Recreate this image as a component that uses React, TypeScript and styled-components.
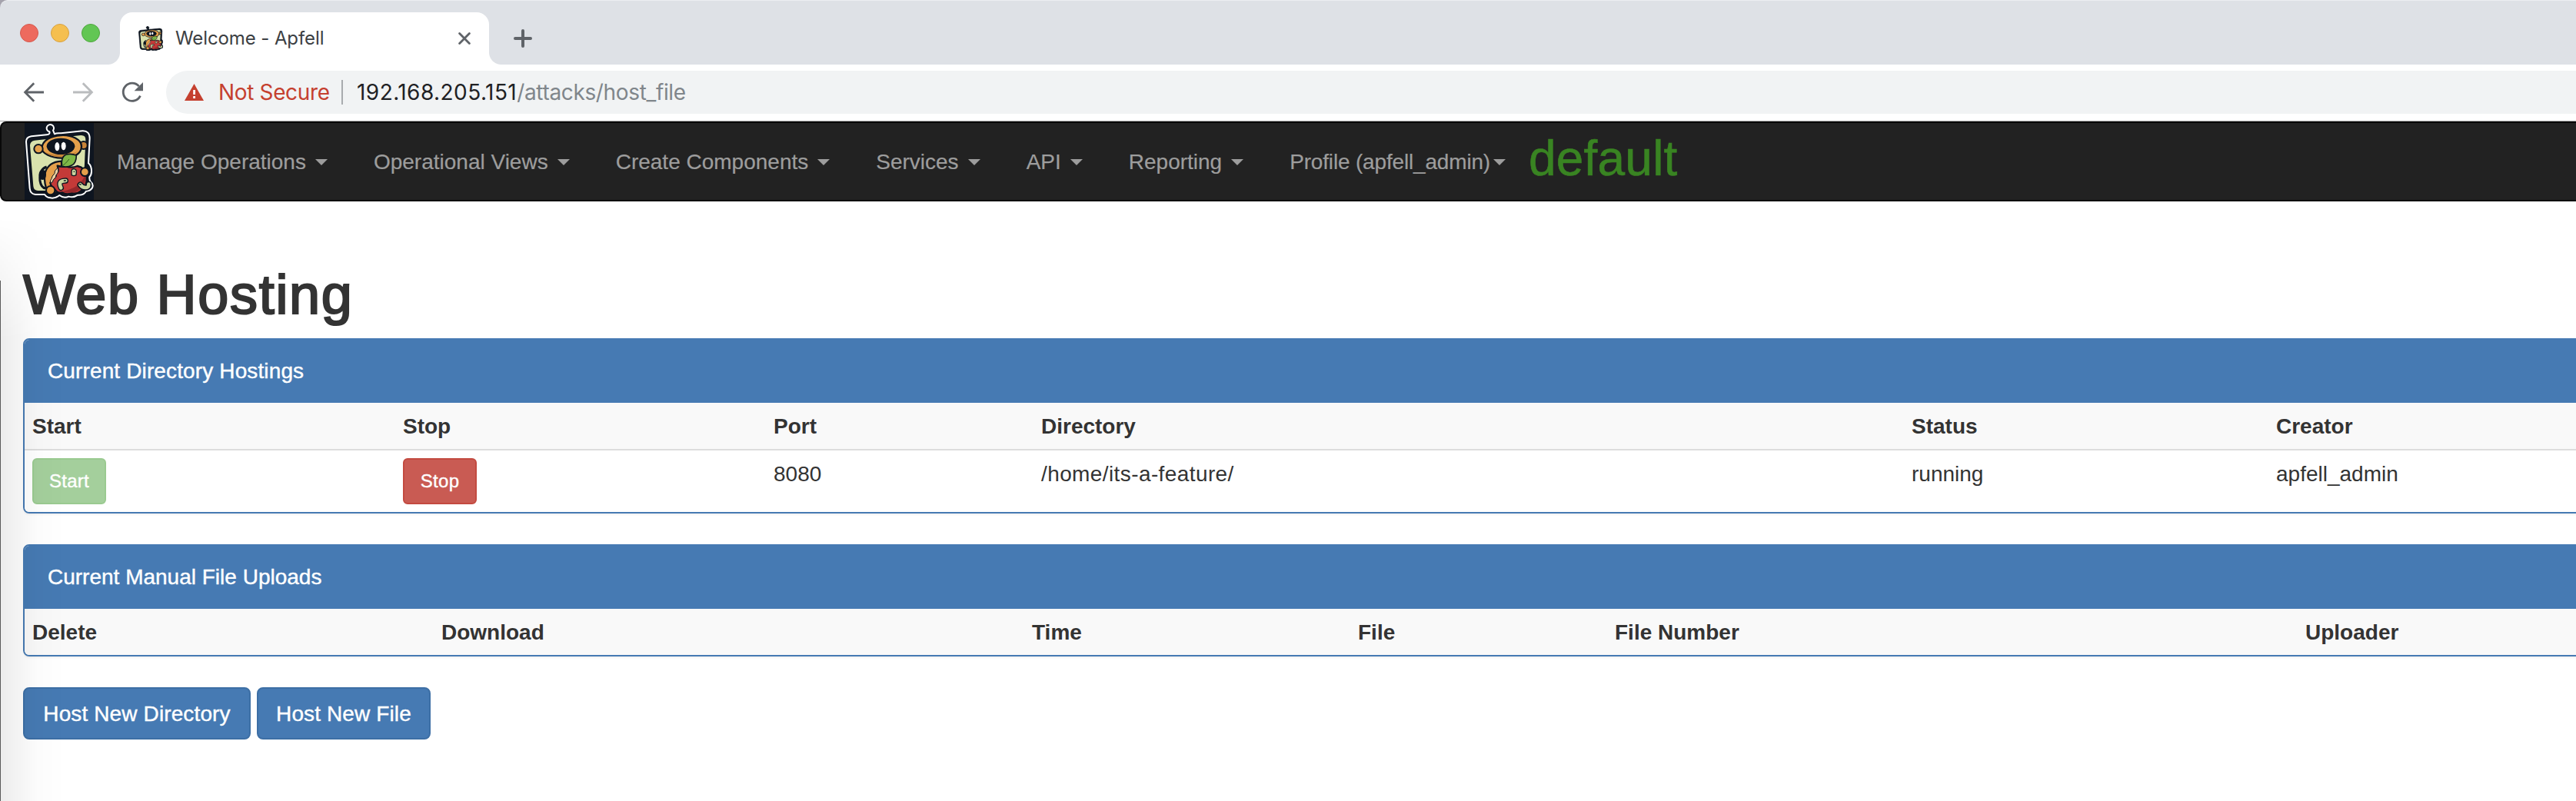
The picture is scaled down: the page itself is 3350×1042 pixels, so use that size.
import React from "react";
import styled, { createGlobalStyle } from "styled-components";

const sans = `"Liberation Sans", Arial, Helvetica, sans-serif`;
const chromeFont = `Inter, Roboto, "Liberation Sans", sans-serif`;

const GlobalStyle = createGlobalStyle`
  *, *::before, *::after { box-sizing: border-box; }
  html, body { margin: 0; background: #fff; }
  body { overflow: hidden; }
`;

const Window = styled.div`
  position: relative;
  width: 100vw;
  height: 100vh;
  overflow: hidden;
  background: #fff;
  color: #333;
  font: 28px/40px ${sans};
`;

/* ---------- Browser chrome ---------- */

const StripBackdrop = styled.div`
  background: #a5a3ad;
`;

const TabStrip = styled.div`
  display: flex;
  align-items: center;
  height: 84px;
  padding-left: 26px;
  border-top: 1px solid #eceef1;
  border-top-left-radius: 10px;
  background: #dee1e6;
`;

const Lights = styled.div`
  display: flex;
  gap: 16px;
  width: 130px;
  padding-top: 1px;
`;

const Light = styled.span<{ $fill: string; $edge: string }>`
  width: 24px;
  height: 24px;
  border: 1px solid ${(p) => p.$edge};
  border-radius: 50%;
  background: ${(p) => p.$fill};
`;

const Tab = styled.div`
  position: relative;
  align-self: flex-end;
  display: flex;
  align-items: center;
  width: 480px;
  height: 68px;
  padding: 0 24px;
  border-radius: 16px 16px 0 0;
  background: #fff;

  &::before,
  &::after {
    content: "";
    position: absolute;
    bottom: 0;
    width: 16px;
    height: 16px;
  }
  &::before {
    left: -16px;
    background: radial-gradient(circle at 0 0, transparent 15.5px, #fff 16.5px);
  }
  &::after {
    right: -16px;
    background: radial-gradient(circle at 100% 0, transparent 15.5px, #fff 16.5px);
  }
`;

const TabTitle = styled.span`
  flex: 1;
  padding-left: 16px;
  color: #3c4043;
  font: 24px/32px ${chromeFont};
  letter-spacing: -0.1px;
`;

const NewTab = styled.span`
  display: flex;
  margin: 15px 0 0 32px;
  align-self: flex-start;
  padding-top: 22px;
`;

const Toolbar = styled.div`
  display: flex;
  align-items: center;
  height: 74px;
  padding: 7px 0 9px 24px;
  border-bottom: 1px solid #a9a9a9;
`;

const NavIcons = styled.div`
  display: flex;
  gap: 24px;
  width: 192px;
`;

const AddressBar = styled.div`
  display: flex;
  align-items: center;
  flex: 1;
  height: 56px;
  padding-left: 24px;
  border-radius: 28px 0 0 28px;
  background: #f1f3f4;
  font: 28px/56px ${chromeFont};
  white-space: nowrap;
`;

const NotSecure = styled.span`
  width: 160px;
  margin-left: 19px;
  color: #c5402f;
  letter-spacing: -0.35px;
`;

const Divider = styled.span`
  width: 2px;
  height: 32px;
  margin-right: 18px;
  background: #a8abae;
`;

const Host = styled.span`
  color: #202124;
  letter-spacing: 0.45px;
`;

const Path = styled.span`
  color: #80868b;
  letter-spacing: -0.35px;
`;

/* ---------- Application navbar ---------- */

const Navbar = styled.nav`
  display: flex;
  align-items: center;
  width: calc(100% + 20px);
  height: 104px;
  padding-left: 30px;
  border: 2px solid #080808;
  border-radius: 8px;
  background: #222;
`;

const NavItem = styled.a<{ $tight?: boolean }>`
  display: flex;
  align-items: center;
  padding: 2px 30px 0;
  color: #9d9d9d;
  letter-spacing: ${(p) => (p.$tight ? "-0.17px" : "0")};
  white-space: nowrap;
  -webkit-text-stroke: 0.2px currentColor;

  &::after {
    content: "";
    margin-left: ${(p) => (p.$tight ? 4 : 12)}px;
    border: 8px solid transparent;
    border-top-color: currentColor;
    border-bottom: 0;
  }
`;

const OperationName = styled.span`
  padding-bottom: 8px;
  color: #398422;
  font-size: 64px;
  line-height: 80px;
  letter-spacing: 0.2px;
  -webkit-text-stroke: 0.6px currentColor;
`;

/* ---------- Page ---------- */

const Main = styled.main`
  width: calc(100% + 40px);
  padding: 82px 0 0 30px;
`;

const Title = styled.h1`
  margin: 0 0 17px;
  font-size: 72px;
  line-height: 79px;
  font-weight: 400;
  letter-spacing: 1.7px;
  -webkit-text-stroke: 2.2px currentColor;
`;

const Panel = styled.section`
  margin-bottom: 40px;
  border: 2px solid #467ab3;
  border-radius: 8px;
  box-shadow: 0 2px 2px rgba(0, 0, 0, 0.05);
  overflow: hidden;
`;

const PanelHeading = styled.header<{ $spacing?: number }>`
  height: 82px;
  padding: 21px 30px;
  background: #467ab3;
  color: #fff;
  letter-spacing: ${(p) => p.$spacing ?? 0}px;
  -webkit-text-stroke: 0.4px currentColor;
`;

const Row = styled.div<{ $cols: string; $head?: boolean }>`
  display: grid;
  grid-template-columns: ${(p) => p.$cols};
  height: ${(p) => (p.$head ? 60 : 82)}px;
  background: ${(p) => (p.$head ? "#f9f9f9" : "#fff")};
  font-weight: ${(p) => (p.$head ? 700 : 400)};
  border-top: ${(p) => (p.$head ? "0" : "2px solid #ddd")};
`;

const Cell = styled.div<{ $spacing?: number }>`
  padding: 11px 10px 9px;
  letter-spacing: ${(p) => p.$spacing ?? 0}px;
`;

const ActionCell = styled(Cell)`
  padding-top: 10px;
`;

const SmallButton = styled.button<{ $bg: string; $edge: string }>`
  display: block;
  width: 96px;
  height: 60px;
  padding: 0;
  border: 2px solid ${(p) => p.$edge};
  border-radius: 6px;
  background: ${(p) => p.$bg};
  color: #fff;
  font: 24px/36px ${sans};
  letter-spacing: 0.3px;
  -webkit-text-stroke: 0.4px currentColor;
`;

const Actions = styled.div`
  display: flex;
  gap: 8px;
`;

const PrimaryButton = styled.button<{ $width: number }>`
  width: ${(p) => p.$width}px;
  height: 68px;
  padding: 2px 0 0;
  border: 2px solid #3d6fa5;
  border-radius: 8px;
  background: #467ab3;
  color: #fff;
  font: 28px/40px ${sans};
  letter-spacing: 0.12px;
  white-space: nowrap;
  -webkit-text-stroke: 0.4px currentColor;
`;

/* Soft shadow cast over the page by the window edge on the left */
const EdgeShadow = styled.div`
  position: absolute;
  left: 0;
  top: 262px;
  bottom: 0;
  width: 90px;
  background: linear-gradient(
    to right,
    rgba(0, 0, 0, 0.075),
    rgba(0, 0, 0, 0.045) 25px,
    rgba(0, 0, 0, 0.012) 50px,
    transparent 85px
  );
  mask-image: linear-gradient(to bottom, transparent 20px, #000 180px);
  pointer-events: none;
`;

const EdgeLine = styled.div`
  position: absolute;
  left: 0;
  top: 365px;
  bottom: 0;
  width: 1px;
  background: #5a5a5a;
`;

/* ---------- Drawings ---------- */

const ink = "#0e1520";

const MascotSvg = styled.svg`
  flex: none;
`;

function Mascot({ width, height, badge }: { width: number; height: number; badge?: boolean }) {
  return (
    <MascotSvg
      width={width}
      height={height}
      viewBox={badge ? "6 15 270 300" : "8 18 262 290"}
      preserveAspectRatio="none"
    >
      {badge && <rect x="6" y="15" width="270" height="300" fill={ink} />}
      <path
        d="M12 88 Q12 70 32 67 L92 61 Q106 60 103 49 A14 14 0 1 1 117 44 L123 58 Q130 53 148 55 L232 46 Q260 45 260 75 L255 172 Q268 183 267 206 Q266 220 259 226 Q258 238 264 245 Q276 254 270 268 Q262 280 246 281 Q238 298 214 296 Q196 308 178 302 Q160 311 142 297 Q124 311 106 307 Q92 306 84 294 L48 294 Q28 292 26 270 Z"
        fill={ink}
        stroke={badge ? "#fff" : ink}
        strokeWidth="6"
        strokeLinejoin="round"
      />
      <path
        d="M27 103 Q27 86 45 83 L225 63 Q245 62 244 82 L236 262 Q235 279 216 279 L58 279 Q42 279 40 262 Z"
        fill="#d9e2ad"
      />
      <circle cx="236" cy="102" r="15" fill="#c88438" stroke={ink} strokeWidth="6" />
      <path d="M92 186 Q62 196 66 240 Q70 268 88 270" fill="none" stroke={ink} strokeWidth="9" />
      <path
        d="M150 164 Q98 166 85 212 Q80 256 98 286 L140 288 L150 190 Z"
        fill="#e5a04b"
        stroke={ink}
        strokeWidth="7"
      />
      <ellipse cx="76" cy="217" rx="14" ry="20" fill={ink} />
      <path
        d="M147 63 C190 60 228 80 228 106 C228 140 190 153 150 152 C108 151 72 133 73 112 C76 82 108 65 147 63 Z"
        fill="#e5a04b"
        stroke={ink}
        strokeWidth="7"
      />
      <path
        d="M84 128 Q108 148 152 148 Q196 146 215 124 Q190 140 150 139 Q112 139 84 128 Z"
        fill="#b9782f"
        opacity="0.7"
      />
      <ellipse cx="147" cy="106" rx="55" ry="32" fill={ink} />
      <ellipse cx="133" cy="107" rx="9" ry="17" fill="#fff" />
      <ellipse cx="158" cy="105" rx="9" ry="16" fill="#fff" />
      <circle cx="60" cy="116" r="17" fill="#e5a04b" stroke={ink} strokeWidth="6" />
      <path
        d="M134 182 Q150 188 168 184 Q190 192 212 183 Q244 190 248 222 Q252 262 226 280 Q210 294 190 288 Q170 298 152 286 Q132 290 124 274 Q108 262 106 248 Q116 246 114 234 Q130 228 128 214 Q142 206 134 182 Z"
        fill="#c43a38"
        stroke={ink}
        strokeWidth="7"
        strokeLinejoin="round"
      />
      <path d="M244 214 Q226 262 176 276 Q160 282 150 281 Q174 292 206 284 Q246 266 244 214 Z" fill="#96292c" />
      <path
        d="M135 190 Q120 202 123 212 Q112 222 111 232 Q104 238 107 250 Q118 246 118 236 Q130 228 129 218 Q142 206 135 190 Z"
        fill="#eed2a2"
        stroke={ink}
        strokeWidth="3"
      />
      <path
        d="M152 184 Q146 150 166 139 Q184 132 208 141 Q208 172 190 180 Q172 190 152 184 Z"
        fill="#7fb848"
        stroke={ink}
        strokeWidth="5"
      />
      <path d="M152 184 Q168 172 180 156" fill="none" stroke="#365f24" strokeWidth="3" />
      <path
        d="M148 268 Q136 244 156 241 L166 240"
        fill="none"
        stroke={ink}
        strokeWidth="22"
        strokeLinecap="round"
      />
      <path
        d="M148 268 Q136 244 156 241 L166 240"
        fill="none"
        stroke="#ccd7a0"
        strokeWidth="14"
        strokeLinecap="round"
      />
      <path
        d="M189 218 L189 205 Q189 194 198 194 Q208 195 208 205 L207 218 Q198 224 189 218 Z"
        fill="#ccd7a0"
        stroke={ink}
        strokeWidth="4"
      />
      <circle cx="199" cy="205" r="2.5" fill={ink} />
      <path
        d="M223 256 Q232 268 245 267 Q256 268 256 254"
        fill="none"
        stroke={ink}
        strokeWidth="23"
        strokeLinecap="round"
      />
      <path
        d="M223 256 Q232 268 245 267 Q256 268 256 254"
        fill="none"
        stroke="#ccd7a0"
        strokeWidth="14"
        strokeLinecap="round"
      />
      <path d="M160 240 h6 M220 254 l5 1" stroke={ink} strokeWidth="4" strokeLinecap="round" />
      <circle cx="241" cy="206" r="16" fill="#e5a04b" stroke={ink} strokeWidth="6" />
      <circle cx="107" cy="278" r="17" fill="#e5a04b" stroke={ink} strokeWidth="6" />
    </MascotSvg>
  );
}

const BackIcon = () => (
  <svg width="40" height="40" viewBox="0 0 40 40" fill="none" stroke="#5f6368" strokeWidth="2.8">
    <path d="M33 20H9M20.2 8.2L8.6 20l11.6 11.8" />
  </svg>
);

const ForwardIcon = () => (
  <svg width="40" height="40" viewBox="0 0 40 40" fill="none" stroke="#babcbe" strokeWidth="2.8">
    <path d="M7 20h24M19.8 8.2L31.4 20 19.8 31.8" />
  </svg>
);

const ReloadIcon = () => (
  <svg width="40" height="40" viewBox="0 0 40 40">
    <path d="M30.4 24.6A11.6 11.6 0 1 1 28.6 12.2" fill="none" stroke="#5f6368" strokeWidth="2.8" />
    <path d="M34 7v11.2H22.6z" fill="#5f6368" />
  </svg>
);

const WarningIcon = () => (
  <svg width="25" height="22" viewBox="0 0 25 22">
    <path d="M12.5 0L25 22H0z" fill="#c5402f" />
    <path d="M11.2 8h2.8v6h-2.8zM11.2 16h2.8v3h-2.8z" fill="#fff" />
  </svg>
);

const CloseIcon = () => (
  <svg width="16" height="16" viewBox="0 0 16 16" stroke="#5f6368" strokeWidth="2.8" strokeLinecap="round">
    <path d="M1.6 1.6l12.8 12.8M14.4 1.6L1.6 14.4" />
  </svg>
);

const PlusIcon = () => (
  <svg width="24" height="24" viewBox="0 0 24 24" stroke="#5f6368" strokeWidth="4" strokeLinecap="round">
    <path d="M12 2v20M2 12h20" />
  </svg>
);

/* ---------- Data ---------- */

const menus = ["Manage Operations", "Operational Views", "Create Components", "Services", "API", "Reporting"];
const hostingCols = "482px 482px 348px 1132px 474px 1fr";
const uploadCols = "532px 768px 424px 334px 898px 1fr";

export default function App() {
  return (
    <Window>
      <GlobalStyle />
      <StripBackdrop>
        <TabStrip>
          <Lights>
            <Light $fill="#ed6a5e" $edge="#d5594e" />
            <Light $fill="#f5bf4f" $edge="#d8a140" />
            <Light $fill="#62c654" $edge="#4fa73f" />
          </Lights>
          <Tab>
            <Mascot width={32} height={32} />
            <TabTitle>Welcome - Apfell</TabTitle>
            <CloseIcon />
          </Tab>
          <NewTab>
            <PlusIcon />
          </NewTab>
        </TabStrip>
      </StripBackdrop>
      <Toolbar>
        <NavIcons>
          <BackIcon />
          <ForwardIcon />
          <ReloadIcon />
        </NavIcons>
        <AddressBar>
          <WarningIcon />
          <NotSecure>Not Secure</NotSecure>
          <Divider />
          <Host>192.168.205.151</Host>
          <Path>/attacks/host_file</Path>
        </AddressBar>
      </Toolbar>

      <Navbar>
        <Mascot width={90} height={100} badge />
        {menus.map((label) => (
          <NavItem key={label}>{label}</NavItem>
        ))}
        <NavItem $tight>Profile (apfell_admin)</NavItem>
        <OperationName>default</OperationName>
      </Navbar>

      <Main>
        <Title>Web Hosting</Title>
        <Panel>
          <PanelHeading $spacing={0.13}>Current Directory Hostings</PanelHeading>
          <Row $cols={hostingCols} $head>
            <Cell>Start</Cell>
            <Cell>Stop</Cell>
            <Cell>Port</Cell>
            <Cell>Directory</Cell>
            <Cell>Status</Cell>
            <Cell>Creator</Cell>
          </Row>
          <Row $cols={hostingCols}>
            <ActionCell>
              <SmallButton $bg="#a4cf9c" $edge="#9aca90">Start</SmallButton>
            </ActionCell>
            <ActionCell>
              <SmallButton $bg="#c95b53" $edge="#c34a40">Stop</SmallButton>
            </ActionCell>
            <Cell>8080</Cell>
            <Cell $spacing={0.4}>/home/its-a-feature/</Cell>
            <Cell>running</Cell>
            <Cell>apfell_admin</Cell>
          </Row>
        </Panel>
        <Panel>
          <PanelHeading>Current Manual File Uploads</PanelHeading>
          <Row $cols={uploadCols} $head>
            <Cell>Delete</Cell>
            <Cell>Download</Cell>
            <Cell>Time</Cell>
            <Cell>File</Cell>
            <Cell>File Number</Cell>
            <Cell>Uploader</Cell>
          </Row>
        </Panel>
        <Actions>
          <PrimaryButton $width={296}>Host New Directory</PrimaryButton>
          <PrimaryButton $width={226}>Host New File</PrimaryButton>
        </Actions>
      </Main>
      <EdgeShadow />
      <EdgeLine />
    </Window>
  );
}
